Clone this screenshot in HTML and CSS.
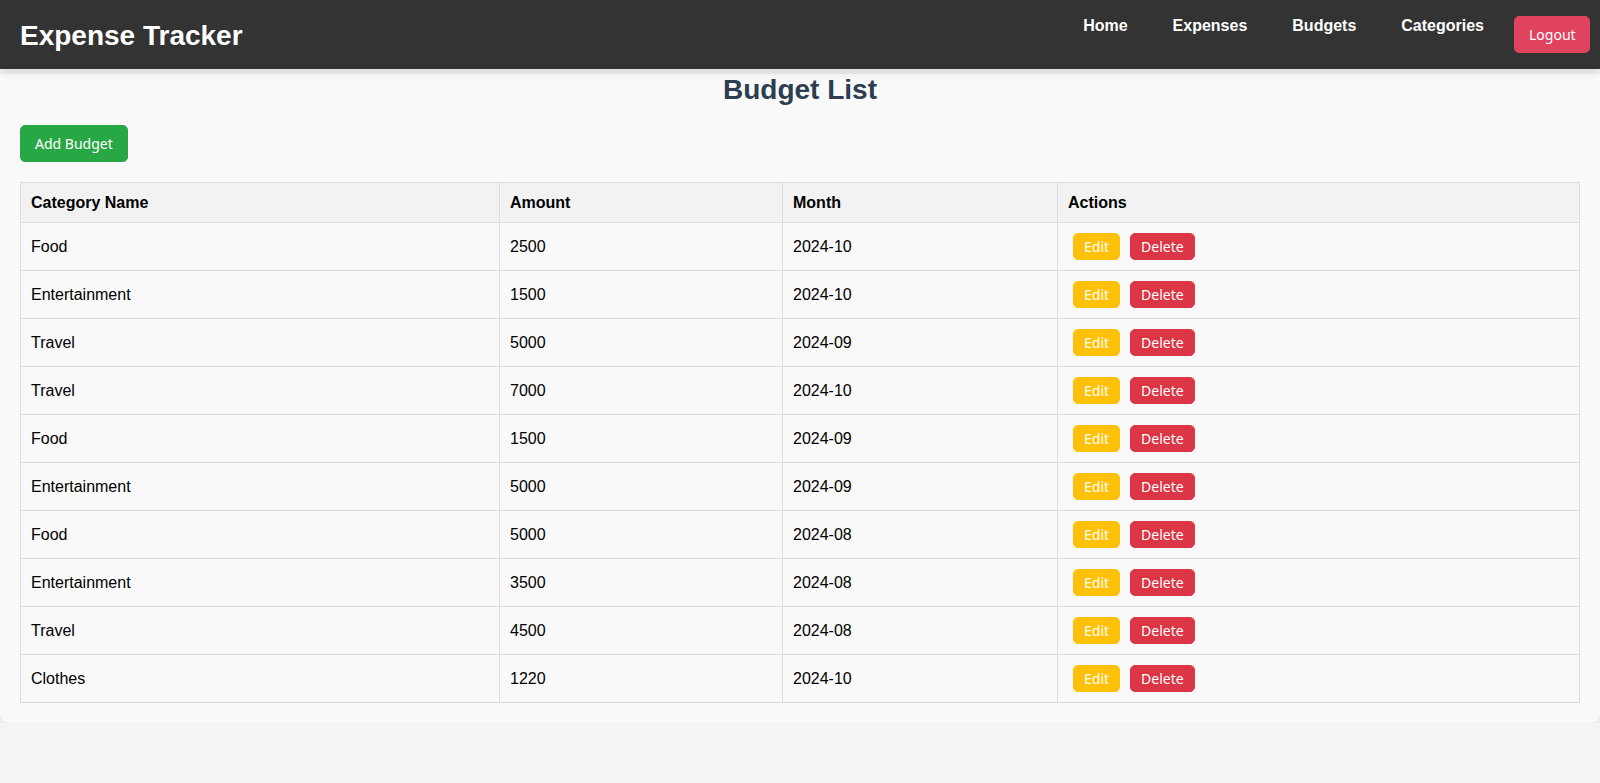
FILE: index.html
```html
<!DOCTYPE html>
<html lang="en">
<head>
<meta charset="utf-8">
<title>Budget List</title>
<link rel="stylesheet" href="styles.css">
</head>
<body>
<header class="topbar">
  <h1 class="brand">Expense Tracker</h1>
  <nav class="nav">
    <a class="nav-link" href="#">Home</a>
    <a class="nav-link" href="#">Expenses</a>
    <a class="nav-link" href="#">Budgets</a>
    <a class="nav-link" href="#">Categories</a>
    <button class="btn btn-logout">Logout</button>
  </nav>
</header>
<main class="container">
  <h2 class="page-title">Budget List</h2>
  <div class="toolbar"><button class="btn btn-add">Add Budget</button></div>
  <table class="budget-table">
    <thead>
      <tr><th class="col-cat">Category Name</th><th class="col-amt">Amount</th><th class="col-month">Month</th><th class="col-act">Actions</th></tr>
    </thead>
    <tbody>
      <tr><td>Food</td><td>2500</td><td>2024-10</td><td class="actions"><button class="btn btn-sm btn-edit">Edit</button><button class="btn btn-sm btn-delete">Delete</button></td></tr>
      <tr><td>Entertainment</td><td>1500</td><td>2024-10</td><td class="actions"><button class="btn btn-sm btn-edit">Edit</button><button class="btn btn-sm btn-delete">Delete</button></td></tr>
      <tr><td>Travel</td><td>5000</td><td>2024-09</td><td class="actions"><button class="btn btn-sm btn-edit">Edit</button><button class="btn btn-sm btn-delete">Delete</button></td></tr>
      <tr><td>Travel</td><td>7000</td><td>2024-10</td><td class="actions"><button class="btn btn-sm btn-edit">Edit</button><button class="btn btn-sm btn-delete">Delete</button></td></tr>
      <tr><td>Food</td><td>1500</td><td>2024-09</td><td class="actions"><button class="btn btn-sm btn-edit">Edit</button><button class="btn btn-sm btn-delete">Delete</button></td></tr>
      <tr><td>Entertainment</td><td>5000</td><td>2024-09</td><td class="actions"><button class="btn btn-sm btn-edit">Edit</button><button class="btn btn-sm btn-delete">Delete</button></td></tr>
      <tr><td>Food</td><td>5000</td><td>2024-08</td><td class="actions"><button class="btn btn-sm btn-edit">Edit</button><button class="btn btn-sm btn-delete">Delete</button></td></tr>
      <tr><td>Entertainment</td><td>3500</td><td>2024-08</td><td class="actions"><button class="btn btn-sm btn-edit">Edit</button><button class="btn btn-sm btn-delete">Delete</button></td></tr>
      <tr><td>Travel</td><td>4500</td><td>2024-08</td><td class="actions"><button class="btn btn-sm btn-edit">Edit</button><button class="btn btn-sm btn-delete">Delete</button></td></tr>
      <tr><td>Clothes</td><td>1220</td><td>2024-10</td><td class="actions"><button class="btn btn-sm btn-edit">Edit</button><button class="btn btn-sm btn-delete">Delete</button></td></tr>
    </tbody>
  </table>
</main>
</body>
</html>
```
FILE: styles.css
```css
* { box-sizing: border-box; }

body {
  margin: 0;
  background: #f4f4f4;
  font-family: "Liberation Sans", Arial, sans-serif;
  font-size: 16px;
  color: #000;
}

.topbar {
  position: relative;
  z-index: 2;
  display: flex;
  justify-content: space-between;
  align-items: flex-start;
  height: 69px;
  padding: 16px 10px 16px 20px;
  background: #333;
  color: #fff;
  box-shadow: 0 2px 10px rgba(0, 0, 0, 0.12);
}

.brand {
  margin: 4px 0 0;
  font-size: 28px;
  font-weight: bold;
  line-height: 32px;
}

.nav {
  display: flex;
  align-items: flex-start;
}

.nav-link {
  color: #fff;
  text-decoration: none;
  font-weight: bold;
  font-size: 16px;
  line-height: 18px;
  margin-top: 1px;
  margin-right: 45px;
}

.nav-link:nth-child(4) { margin-right: 30px; }

.btn {
  font-family: "Noto Sans", sans-serif;
  font-size: 14px;
  line-height: 15px;
  color: #fff;
  border-radius: 5px;
  cursor: pointer;
}

.btn-logout {
  padding: 10px 14px;
  background: #e0435e;
  border: 1px solid #e0435e;
  width: 76px;
}

.container {
  position: relative;
  z-index: 1;
  background: #f9f9f9;
  border-radius: 0 0 8px 8px;
  box-shadow: 0 2px 10px rgba(0, 0, 0, 0.1);
  padding: 0 20px 20px;
}

.page-title {
  margin: 5px 0 0;
  text-align: center;
  color: #2c3e50;
  font-size: 28px;
  line-height: 32px;
}

.toolbar {
  padding: 19px 0 20px;
  display: flex;
}

.btn-add {
  padding: 10px 14px;
  background: #28a745;
  border: 1px solid #28a745;
}

.budget-table {
  width: 100%;
  border-collapse: collapse;
  table-layout: fixed;
}

.budget-table th,
.budget-table td {
  border: 1px solid #ddd;
  padding: 10px;
  text-align: left;
  vertical-align: middle;
  line-height: 18px;
}

.budget-table th {
  background: #f2f2f2;
  font-weight: bold;
  height: 40px;
}

.budget-table td {
  height: 48px;
}

.col-cat { width: 479px; }
.col-amt { width: 283px; }
.col-month { width: 275px; }

.actions .btn { vertical-align: middle; }

.btn-sm {
  padding: 5px 10px;
  margin: 0 5px;
}

.btn-edit {
  background: #ffc107;
  border: 1px solid #ffc107;
}

.btn-delete {
  background: #dc3545;
  border: 1px solid #dc3545;
}
```
